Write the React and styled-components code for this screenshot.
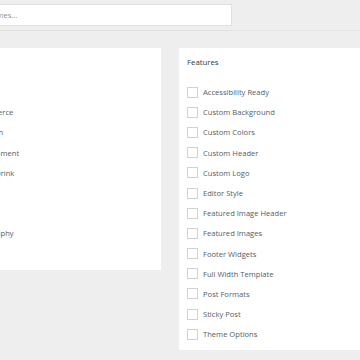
import React from "react";
import styled, { createGlobalStyle } from "styled-components";

const GlobalStyle = createGlobalStyle`
  html, body {
    margin: 0;
    padding: 0;
    background: #eeeeee;
    overflow: hidden;
  }
  body {
    font-family: "Open Sans", "Noto Sans", sans-serif;
  }
`

const Page = styled.div`
  width: 360px;
  height: 360px;
  overflow: hidden;
`

const Canvas = styled.div`
  margin-left: -56px;
  width: 470px;
`

const SearchBar = styled.div`
  height: 31px;
  border-bottom: 1px solid #e2e2e2;
  display: flex;
  align-items: flex-start;
  padding-top: 4px;
  box-sizing: border-box;
`

const SearchInput = styled.input`
  margin-left: -24px;
  width: 312px;
  height: 22px;
  box-sizing: border-box;
  border: 1px solid #e0e0e0;
  background: #fff;
  font-family: inherit;
  font-size: 7.6px;
  color: #32373c;
  padding: 0 6px;
  outline: none;
  &::placeholder {
    color: #8a8f94;
  }
`

const Panels = styled.div`
  display: flex;
  align-items: flex-start;
  gap: 18px;
  padding-top: 17px;
`

const Panel = styled.div`
  width: ${p => p.$width}px;
  height: ${p => p.$height}px;
  background: #fff;
  box-sizing: border-box;
  padding: 8px 8px 0;
`

const Heading = styled.div`
  font-size: 7.8px;
  color: #32373c;
  height: 12px;
  line-height: 12px;
  margin-bottom: 14px;
`

const List = styled.div`
  display: flex;
  flex-direction: column;
`

const Row = styled.label`
  display: flex;
  align-items: center;
  height: 20.2px;
  gap: 5px;
`

const Box = styled.span`
  width: 11px;
  height: 11px;
  box-sizing: border-box;
  border: 1px solid #d2d2d2;
  background: #fff;
  flex-shrink: 0;
`

const Label = styled.span`
  font-size: 7.6px;
  color: #555d66;
  white-space: nowrap;
`

const subjects = ["Blog", "E-Commerce", "Education", "Entertainment", "Food & Drink", "Holiday", "News", "Photography", "Portfolio"];
const features = ["Accessibility Ready", "Custom Background", "Custom Colors", "Custom Header", "Custom Logo", "Editor Style", "Featured Image Header", "Featured Images", "Footer Widgets", "Full Width Template", "Post Formats", "Sticky Post", "Theme Options"];

const FilterPanel = ({ title, items, width, height }) => (
  <Panel $width={width} $height={height}>
    <Heading>{title}</Heading>
    <List>
      {items.map(item => (
        <Row key={item}>
          <Box />
          <Label>{item}</Label>
        </Row>
      ))}
    </List>
  </Panel>
)

const App = () => {
  return (
    <Page>
      <GlobalStyle />
      <Canvas>
        <SearchBar>
          <SearchInput placeholder="Search installed themes..." />
        </SearchBar>
        <Panels>
          <FilterPanel title="Subject" items={subjects} width={217} height={222} />
          <FilterPanel title="Features" items={features} width={217} height={302} />
        </Panels>
      </Canvas>
    </Page>
  );
};

export default App;
